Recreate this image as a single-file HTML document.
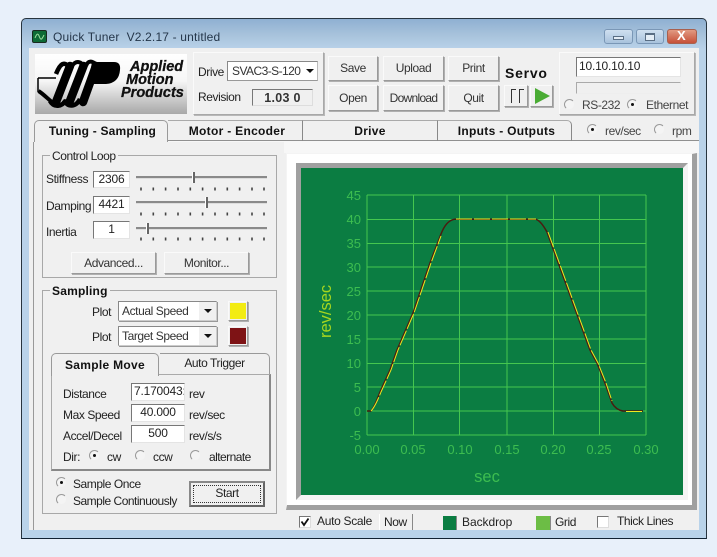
<!DOCTYPE html>
<html><head><meta charset="utf-8"><style>
html,body{margin:0;padding:0}
body{width:717px;height:557px;overflow:hidden;background:#e8f0fa;position:relative;font:12px "Liberation Sans",sans-serif;color:#222}
#r{position:absolute;left:0;top:0;width:717px;height:557px;filter:blur(.35px)}
#r div,#r span,#r svg{position:absolute}
.t{white-space:nowrap;line-height:14px;letter-spacing:-.42px}
.b{font-weight:bold;color:#111}
.btn{background:#f0f0f0;border:1px solid;border-color:#fafafa #9a9a9a #9a9a9a #fafafa;box-shadow:1px 1px 0 #b0b0b0;box-sizing:border-box;text-align:center;color:#333}
.in{background:#fff;border:1px solid;border-color:#777 #e4e4e4 #e4e4e4 #777;box-sizing:border-box;text-align:center;line-height:15px;color:#222;white-space:nowrap;overflow:hidden;letter-spacing:-.2px}
.sel{background:#fff;border:1px solid;border-color:#888 #ccc #ccc #888;box-shadow:1px 1px 0 #999;box-sizing:border-box;white-space:nowrap;color:#333;padding-left:3px;letter-spacing:-.42px}
.ar{right:0;top:0;bottom:0;width:17px;background:#f0f0f0}
.ar:after{content:"";position:absolute;left:5px;top:50%;margin-top:-2px;border:4px solid transparent;border-top:4px solid #111;border-bottom:0}
.rad{width:11px;height:11px;border-radius:50%;background:#f4f4f4;border:1px solid;border-color:#999 #f0f0f0 #f0f0f0 #999;box-sizing:border-box}
.on:after{content:"";position:absolute;left:3px;top:3px;width:3px;height:3px;border-radius:50%;background:#111}
.grp{border:1px solid #a8a8a8;box-sizing:border-box}
.lg{background:#f0f0f0;padding:0 2px}
.track{height:2px;background:#8a8a8a;border-bottom:1px solid #ddd;width:131px;left:136px}
.thumb{width:2px;height:11px;background:#666;border-left:1px solid #fff}
</style></head><body><div id="r">

<!-- window -->
<div style="left:21px;top:18px;width:686px;height:521px;border-radius:5px 5px 0 0;background:linear-gradient(#8fb0d2 0,#a8c3dc 16px,#b9d2e9 30px,#b9d3ea 100%);border:1px solid #27343f;border-bottom:1px solid #123;box-sizing:border-box"></div>
<div style="left:29px;top:48px;width:670px;height:482px;background:#f0f0f0"></div>

<!-- title -->
<div style="left:32px;top:30px;width:15px;height:13px;background:#0e6b36;border:1px solid #1a2a20;border-radius:2px;box-sizing:border-box"></div>
<svg style="left:33px;top:31px" width="13" height="11"><path d="M2 7 C4 2 5 2 6.500 6 S9 8 11 4" fill="none" stroke="#9fe0a0" stroke-width="1"/></svg>
<div style="left:53px;top:30px;font-size:12px;line-height:14px;white-space:nowrap;color:#24364a;letter-spacing:.17px">Quick Tuner&nbsp; V2.2.17 - untitled</div>
<div style="left:604px;top:29px;width:29px;height:15px;border:1px solid #7a97b6;border-radius:3px;background:linear-gradient(#d0e0f0,#a8c2dc);box-sizing:border-box"></div>
<div style="left:613px;top:36px;width:11px;height:4px;border:1px solid #5a6e84;background:#e4edf6;box-sizing:border-box"></div>
<div style="left:636px;top:29px;width:28px;height:15px;border:1px solid #7a97b6;border-radius:3px;background:linear-gradient(#d0e0f0,#a8c2dc);box-sizing:border-box"></div>
<div style="left:645px;top:33px;width:10px;height:8px;border:1px solid #5a6e84;border-top-width:2px;background:#e4edf6;box-sizing:border-box"></div>
<div style="left:667px;top:29px;width:30px;height:15px;border:1px solid #a8604e;border-radius:3px;background:linear-gradient(#e29a82,#c65038);box-sizing:border-box"></div>
<div class="b" style="left:677px;top:29px;color:#fff;font-size:13px;line-height:14px">X</div>

<!-- logo -->
<div style="left:35px;top:54px;width:152px;height:60px;background:linear-gradient(#fff 0,#f6f6f6 45%,#a8a8a8 100%)"></div>
<svg style="left:35px;top:54px" width="90" height="60" viewBox="35 54 90 60">
<path d="M38 78 H56 M38 78 V92" fill="none" stroke="#000" stroke-width="1.500"/>
<path d="M38.500 91 C42 93 47 98 53 103" fill="none" stroke="#000" stroke-width="4"/>
<path d="M56 102 L70 66 M69.500 102 L83.500 66 M83 102 L96 66" fill="none" stroke="#000" stroke-width="8.500" stroke-linecap="round"/>
<path d="M50 101 C54 108 62 107 66 100 M64 100 C68 108 76 107 80 99 M70 68 C64 60 60 64 56 74" fill="none" stroke="#000" stroke-width="4.500"/>
<path d="M72 66 C76 60 82 61 84 68 M86 66 C88 60 92 61 96 64" fill="none" stroke="#000" stroke-width="4"/>
<path d="M92 62 H114 Q121 62 120 70 Q119 83 106 84 H88 Z" fill="#000"/>
</svg>
<div style="left:130px;top:60px;font:italic bold 14.500px/14px 'Liberation Sans',sans-serif;color:#111;-webkit-text-stroke:.3px #111;white-space:nowrap">Applied</div>
<div style="left:126px;top:73px;font:italic bold 14.500px/14px 'Liberation Sans',sans-serif;color:#111;-webkit-text-stroke:.3px #111;white-space:nowrap">Motion</div>
<div style="left:121px;top:86px;font:italic bold 14.500px/14px 'Liberation Sans',sans-serif;color:#111;-webkit-text-stroke:.3px #111;white-space:nowrap">Products</div>

<!-- drive panel -->
<div style="left:193px;top:52px;width:131px;height:63px;background:#f0f0f0;border:1px solid;border-color:#fafafa #a8a8a8 #a8a8a8 #fafafa;box-shadow:1px 1px 0 #b8b8b8;box-sizing:border-box"></div>
<div class="t" style="left:198px;top:65px">Drive</div>
<div class="sel" style="left:227px;top:61px;width:91px;height:20px;line-height:18px;letter-spacing:-.55px;padding-left:4px;box-shadow:none;border-color:#888 #bbb #999 #888">SVAC3-S-120<div class="ar" style="background:#fff;width:16px"></div></div>
<div class="t" style="left:198px;top:90px">Revision</div>
<div class="b" style="left:252px;top:89px;width:61px;height:17px;border:1px solid;border-color:#777 #ddd #ddd #777;box-sizing:border-box;text-align:center;line-height:16px;font-size:12.500px;letter-spacing:.3px;color:#333;white-space:nowrap">1.03 0</div>

<!-- top buttons -->
<div class="btn t" style="left:328px;top:56px;width:50px;height:25px;line-height:23px">Save</div>
<div class="btn t" style="left:328px;top:85px;width:50px;height:26px;line-height:24px">Open</div>
<div class="btn t" style="left:383px;top:56px;width:61px;height:25px;line-height:23px">Upload</div>
<div class="btn t" style="left:383px;top:85px;width:61px;height:26px;line-height:24px;letter-spacing:-.7px">Download</div>
<div class="btn t" style="left:448px;top:56px;width:51px;height:25px;line-height:23px">Print</div>
<div class="btn t" style="left:448px;top:85px;width:51px;height:26px;line-height:24px">Quit</div>
<div class="b t" style="left:505px;top:65px;font-size:14px;line-height:16px;letter-spacing:.75px">Servo</div>
<div class="btn" style="left:504px;top:85px;width:24px;height:22px"></div>
<svg style="left:504px;top:85px" width="24" height="22"><path d="M7.500 18 V4.500 H12 M15.500 18 V4.500 H20" fill="none" stroke="#333" stroke-width="1"/></svg>
<div class="btn" style="left:530px;top:85px;width:23px;height:22px"></div>
<svg style="left:530px;top:85px" width="23" height="22"><path d="M5 3 L20 11 L5 19 Z" fill="#4aac34"/></svg>

<!-- ip panel -->
<div style="left:559px;top:52px;width:136px;height:63px;background:#f0f0f0;border:1px solid;border-color:#fafafa #a8a8a8 #a8a8a8 #fafafa;box-shadow:1px 1px 0 #b8b8b8;box-sizing:border-box"></div>
<div class="in" style="left:576px;top:57px;width:105px;height:20px;text-align:left;padding-left:2px;line-height:17px">10.10.10.10</div>
<div style="left:576px;top:82px;width:105px;height:12px;border:1px solid;border-color:#aaa #eee #eee #aaa;box-sizing:border-box"></div>
<div class="rad" style="left:564px;top:99px"></div><div class="t" style="left:582px;top:98px;color:#444">RS-232</div>
<div class="rad on" style="left:627px;top:99px"></div><div class="t" style="left:646px;top:98px;color:#444">Ethernet</div>

<!-- tabs -->
<div style="left:34px;top:140px;width:665px;height:1px;background:#909090"></div>
<div style="left:29px;top:141px;width:670px;height:12px;background:#f7f7f7"></div>
<div class="b" style="left:34px;top:120px;width:134px;height:22px;background:#f0f0f0;border:1px solid #999;border-bottom:0;border-radius:5px 5px 0 0;box-sizing:border-box;text-align:center;line-height:21px;letter-spacing:.2px;white-space:nowrap;padding-left:3px">Tuning - Sampling</div>
<div class="b" style="left:168px;top:120px;width:135px;height:21px;text-align:center;line-height:20px;border-top:1px solid #aaa;border-right:1px solid #888;box-sizing:border-box;letter-spacing:.3px;white-space:nowrap;padding-left:4px">Motor - Encoder</div>
<div class="b" style="left:303px;top:120px;width:135px;height:21px;text-align:center;line-height:20px;border-top:1px solid #aaa;border-right:1px solid #888;box-sizing:border-box;letter-spacing:.3px;white-space:nowrap">Drive</div>
<div class="b" style="left:438px;top:120px;width:134px;height:21px;text-align:center;line-height:20px;border-top:1px solid #aaa;border-right:1px solid #888;border-radius:0 5px 0 0;box-sizing:border-box;letter-spacing:.3px;white-space:nowrap;padding-left:4px">Inputs - Outputs</div>
<div class="rad on" style="left:587px;top:124px"></div><div class="t" style="left:605px;top:124px;color:#444">rev/sec</div>
<div class="rad" style="left:654px;top:124px"></div><div class="t" style="left:672px;top:124px;color:#444">rpm</div>

<!-- left column -->
<div style="left:29px;top:141px;width:5px;height:389px;background:#f0f0f0"></div>
<div style="left:33px;top:142px;width:1px;height:388px;background:#999"></div>
<div style="left:34px;top:142px;width:250px;height:388px;background:#f0f0f0"></div>

<!-- control loop -->
<div class="grp" style="left:42px;top:155px;width:235px;height:123px"></div>
<div class="t lg" style="left:50px;top:149px">Control Loop</div>
<div class="t" style="left:46px;top:172px">Stiffness</div>
<div class="in" style="left:93px;top:171px;width:37px;height:17px">2306</div>
<div class="t" style="left:46px;top:199px">Damping</div>
<div class="in" style="left:93px;top:196px;width:37px;height:18px">4421</div>
<div class="t" style="left:46px;top:225px">Inertia</div>
<div class="in" style="left:93px;top:221px;width:37px;height:18px">1</div>
<div class="track" style="top:176px"></div><div class="thumb" style="left:192px;top:172px"></div>
<div class="track" style="top:201px"></div><div class="thumb" style="left:205px;top:197px"></div>
<div class="track" style="top:227px"></div><div class="thumb" style="left:146px;top:223px"></div>
<svg style="left:136px;top:186px" width="132" height="58"><path d="M5 1.500v3M17.300 1.500v3M29.600 1.500v3M42 1.500v3M54.300 1.500v3M66.600 1.500v3M79 1.500v3M91.300 1.500v3M103.600 1.500v3M116 1.500v3M128 1.500v3M5 26.500v3M17.300 26.500v3M29.600 26.500v3M42 26.500v3M54.300 26.500v3M66.600 26.500v3M79 26.500v3M91.300 26.500v3M103.600 26.500v3M116 26.500v3M128 26.500v3M5 51.500v3M17.300 51.500v3M29.600 51.500v3M42 51.500v3M54.300 51.500v3M66.600 51.500v3M79 51.500v3M91.300 51.500v3M103.600 51.500v3M116 51.500v3M128 51.500v3" stroke="#444" stroke-width="1.600" fill="none"/></svg>
<div class="btn t" style="left:71px;top:252px;width:85px;height:22px;line-height:20px">Advanced...</div>
<div class="btn t" style="left:164px;top:252px;width:85px;height:22px;line-height:20px">Monitor...</div>

<!-- sampling -->
<div class="grp" style="left:42px;top:290px;width:235px;height:224px"></div>
<div class="b t lg" style="left:50px;top:284px;letter-spacing:.2px">Sampling</div>
<div class="t" style="left:92px;top:305px">Plot</div>
<div class="sel" style="left:118px;top:301px;width:99px;height:20px;line-height:18px">Actual Speed<div class="ar"></div></div>
<div class="btn" style="left:228px;top:301px;width:20px;height:20px"></div><div style="left:230px;top:303px;width:16px;height:16px;background:#f3ec12"></div>
<div class="t" style="left:92px;top:330px">Plot</div>
<div class="sel" style="left:118px;top:326px;width:99px;height:20px;line-height:18px">Target Speed<div class="ar"></div></div>
<div class="btn" style="left:228px;top:326px;width:20px;height:20px"></div><div style="left:230px;top:328px;width:16px;height:16px;background:#7e1315"></div>

<div style="left:51px;top:374px;width:220px;height:97px;background:#f0f0f0;border:1px solid;border-color:#aaa #888 #888 #aaa;border-width:1px 2px 2px 1px;box-sizing:border-box"></div>
<div class="b" style="left:51px;top:353px;width:108px;height:23px;background:#f0f0f0;border:1px solid #999;border-bottom:0;border-radius:5px 5px 0 0;box-sizing:border-box;text-align:center;line-height:23px;letter-spacing:.3px;white-space:nowrap">Sample Move</div>
<div class="t" style="left:160px;top:353px;width:110px;height:21px;border:1px solid #999;border-left:0;border-bottom:0;border-radius:0 5px 0 0;box-sizing:border-box;text-align:center;line-height:19px">Auto Trigger</div>

<div class="t" style="left:63px;top:387px">Distance</div>
<div class="in" style="left:131px;top:383px;width:54px;height:18px;text-align:left;padding-left:2px">7.170043:</div><div class="t" style="left:189px;top:387px">rev</div>
<div class="t" style="left:63px;top:408px">Max Speed</div>
<div class="in" style="left:131px;top:404px;width:54px;height:18px">40.000</div><div class="t" style="left:189px;top:408px">rev/sec</div>
<div class="t" style="left:63px;top:429px">Accel/Decel</div>
<div class="in" style="left:131px;top:425px;width:54px;height:18px">500</div><div class="t" style="left:189px;top:429px">rev/s/s</div>
<div class="t" style="left:63px;top:450px">Dir:</div>
<div class="rad on" style="left:89px;top:450px"></div><div class="t" style="left:107px;top:450px">cw</div>
<div class="rad" style="left:135px;top:450px"></div><div class="t" style="left:153px;top:450px">ccw</div>
<div class="rad" style="left:190px;top:450px"></div><div class="t" style="left:209px;top:450px;letter-spacing:-.55px">alternate</div>

<div class="rad on" style="left:56px;top:477px"></div><div class="t" style="left:73px;top:477px;letter-spacing:-.45px">Sample Once</div>
<div class="rad" style="left:56px;top:494px"></div><div class="t" style="left:73px;top:494px;letter-spacing:-.5px">Sample Continuously</div>
<div class="t" style="left:189px;top:481px;width:76px;height:26px;background:#f0f0f0;border:2px solid #777;border-color:#888 #666 #666 #888;box-sizing:border-box;text-align:center;line-height:20px"><div style="left:2px;top:2px;right:2px;bottom:2px;border:1px dotted #333"></div>Start</div>

<!-- chart -->
<div style="left:286px;top:153px;width:413px;height:358px;background:#f0f0f0"></div>
<div style="left:286px;top:153px;width:411px;height:357px;background:#fff;border-right:5px solid #a0a0a0;border-bottom:5px solid #a0a0a0;border-left:1px solid #f4f4f4;border-top:1px solid #f4f4f4;box-sizing:border-box"></div>
<div style="left:296px;top:163px;width:392px;height:337px;background:#f4f4f4;border-left:5px solid #a0a0a0;border-top:5px solid #a0a0a0;border-right:5px solid #f4f4f4;border-bottom:5px solid #f4f4f4;box-sizing:border-box"></div>
<svg style="left:301px;top:168px" width="382" height="327" viewBox="301 168 382 327">
<rect x="301" y="168" width="382" height="327" fill="#0b7d42"/>
<g stroke="#45c74f" stroke-width="1" fill="none" shape-rendering="crispEdges">
<path d="M367 195H646M367 219.500H646M367 243.500H646M367 267H646M367 291H646M367 315H646M367 339H646M367 363.500H646M367 387H646M367 411H646M367 435H646"/>
<path d="M367 195V435M413.500 195V435M459.500 195V435M507 195V435M553.500 195V435M599.500 195V435M646 195V435"/>
</g>
<g fill="#3dbd50" font-family="Liberation Sans" font-size="13" text-anchor="end">
<text x="361" y="200">45</text><text x="361" y="224">40</text><text x="361" y="248">35</text><text x="361" y="272">30</text><text x="361" y="296">25</text><text x="361" y="320">20</text><text x="361" y="344">15</text><text x="361" y="368">10</text><text x="361" y="392">5</text><text x="361" y="416">0</text><text x="361" y="440">-5</text>
</g>
<g fill="#3dbd50" font-family="Liberation Sans" font-size="13" text-anchor="middle">
<text x="367" y="454">0.00</text><text x="413" y="454">0.05</text><text x="460" y="454">0.10</text><text x="507" y="454">0.15</text><text x="553" y="454">0.20</text><text x="599" y="454">0.25</text><text x="646" y="454">0.30</text>
<text x="487" y="482" font-size="16.500">sec</text>
</g>
<text transform="translate(331,338) rotate(-90)" fill="#a6d61f" font-family="Liberation Sans" font-size="16.500">rev/sec</text>
<path d="M367 411 L371 411 Q374 408 380 392 L390 370 L397 350 L413 313 L430 263 L441 234 Q446 221 454 219.300 L536 219.300 Q541 221 547 232 L590 350 L597 363 L605 383 L612 403 Q616 410 623 411 L643 411" fill="none" stroke="#4a1c10" stroke-width="1.500" stroke-linejoin="round"/>
<path d="M371 411 Q375 407 381 392 L391 370 L398 350 L414 313 L431 263 L441 236 M548 232 L591 350 L598 363 L606 383 L612 401 M626 411.500 H643 M456 219H536" fill="none" stroke="#f0e820" stroke-width="1" stroke-dasharray="16 2"/>
</svg>

<!-- status bar -->
<div style="left:286px;top:511px;width:413px;height:19px;background:#f0f0f0"></div>
<div style="left:299px;top:516px;width:12px;height:12px;background:#fff;border:1px solid;border-color:#777 #ddd #ddd #777;box-sizing:border-box"></div>
<svg style="left:299px;top:516px" width="12" height="12"><path d="M2.500 5.500 L5 9 L9.500 2.500" fill="none" stroke="#111" stroke-width="1.800"/></svg>
<div class="t" style="left:317px;top:514px;letter-spacing:-.3px">Auto Scale</div>
<div class="t" style="left:384px;top:515px">Now</div>
<div style="left:379px;top:514px;width:1px;height:16px;background:#fff"></div>
<div style="left:412px;top:514px;width:1px;height:16px;background:#888"></div>
<div style="left:443px;top:516px;width:14px;height:14px;background:#0b7d42;border-right:1px solid #888;box-sizing:border-box"></div><div class="t" style="left:462px;top:515px;letter-spacing:-.05px">Backdrop</div>
<div style="left:536px;top:516px;width:15px;height:14px;background:#6cbd45;border-right:1px solid #888;box-sizing:border-box"></div><div class="t" style="left:555px;top:515px">Grid</div>
<div style="left:597px;top:516px;width:12px;height:12px;background:#fff;border:1px solid;border-color:#777 #ddd #ddd #777;box-sizing:border-box"></div>
<div class="t" style="left:617px;top:514px">Thick Lines</div>
</div></body></html>
